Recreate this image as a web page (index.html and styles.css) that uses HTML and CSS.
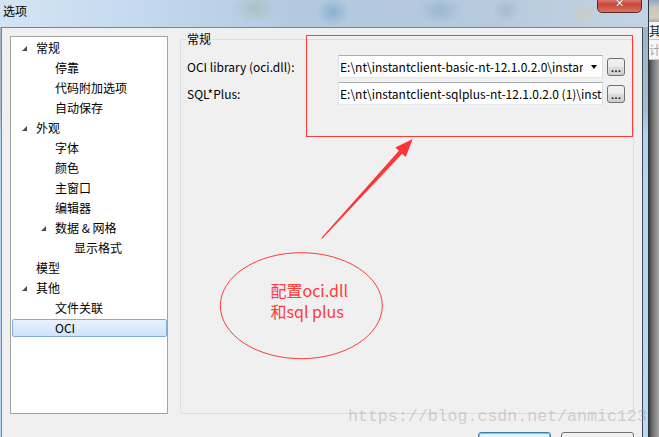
FILE: index.html
```html
<!DOCTYPE html>
<html lang="zh-CN">
  <head>
    <meta charset="UTF-8" />
    <title>选项</title>
    <link rel="stylesheet" href="styles.css">
  </head>

  <body>
    <div class="screen">
      <div class="dialog">
        <div class="titlebar">
          <span class="title">选项</span>
          <span class="close">✕</span>
        </div>
        <div class="frame-row">
          <div class="client">
            <div class="main">
              <div class="tree">
                <div class="node"><span class="tw open"></span>常规</div>
                <div class="node lv1"><span class="tw"></span>停靠</div>
                <div class="node lv1"><span class="tw"></span>代码附加选项</div>
                <div class="node lv1"><span class="tw"></span>自动保存</div>
                <div class="node"><span class="tw open"></span>外观</div>
                <div class="node lv1"><span class="tw"></span>字体</div>
                <div class="node lv1"><span class="tw"></span>颜色</div>
                <div class="node lv1"><span class="tw"></span>主窗口</div>
                <div class="node lv1"><span class="tw"></span>编辑器</div>
                <div class="node lv1"><span class="tw open"></span>数据 &amp; 网格</div>
                <div class="node lv2"><span class="tw"></span>显示格式</div>
                <div class="node"><span class="tw"></span>模型</div>
                <div class="node"><span class="tw open"></span>其他</div>
                <div class="node lv1"><span class="tw"></span>文件关联</div>
                <div class="node lv1 sel"><span class="tw"></span>OCI</div>
              </div>

              <fieldset class="group">
                <legend>常规</legend>
                <div class="form">
                  <label>OCI library (oci.dll):</label>
                  <div class="field combo">
                    <span class="val">E:\nt\instantclient-basic-nt-12.1.0.2.0\instantclient_12_1\oci.dll</span>
                    <span class="arrow"></span>
                  </div>
                  <button class="browse">...</button>

                  <label>SQL*Plus:</label>
                  <div class="field">
                    <span class="val">E:\nt\instantclient-sqlplus-nt-12.1.0.2.0 (1)\instantclient_12_1\sqlplus.exe</span>
                  </div>
                  <button class="browse">...</button>
                </div>
              </fieldset>
            </div>

            <div class="buttons">
              <button class="btn default"></button>
              <button class="btn"></button>
            </div>
          </div>
        </div>
      </div>

      <div class="behind">
        <div class="b-top"></div>
        <div class="b-tool">其<span class="b-icon"></span></div>
        <div class="b-row">计</div>
      </div>

      <!-- 标注 -->
      <svg class="marks" width="659" height="437" viewBox="0 0 659 437">
        <rect class="mark-line" x="306.5" y="35.5" width="326" height="101" />
        <polygon class="mark-fill"
          points="321.3,238 322.2,238.7 402.1,153.8 405.7,157 412.7,139 395.3,147.6 398.9,150.8" />
        <ellipse class="mark-line" cx="301.3" cy="305.7" rx="81" ry="53" />
        <text class="mark-text" x="270.5" y="297">配置oci.dll</text>
        <text class="mark-text" x="270.5" y="318">和sql plus</text>
      </svg>

      <div class="watermark">https://blog.csdn.net/anmic123</div>
    </div>
  </body>
</html>
```

FILE: styles.css
```css
* {
  margin: 0;
  padding: 0;
  box-sizing: border-box;
}

html,
body {
  width: 659px;
  height: 437px;
  overflow: hidden;
}

body {
  font-family: "Noto Sans CJK SC", "Noto Sans", sans-serif;
  font-size: 12px;
  color: #000;
  background: #b9d3ec;
}

.screen {
  position: relative;
  display: flex;
  width: 659px;
  height: 437px;
}

/* 对话框 */
.dialog {
  width: 649px;
  display: flex;
  flex-direction: column;
  border-right: 1px solid #2c3742;
  background: linear-gradient(to bottom, #9fb0c1 0, #a8bccf 110px, #b7d3ee 135px, #bcd8f2 100%);
}

.titlebar {
  height: 27px;
  display: flex;
  justify-content: space-between;
  align-items: flex-start;
  background:
    radial-gradient(ellipse 22px 14px at 255px 8px, rgba(140, 170, 120, 0.3), transparent),
    radial-gradient(ellipse 16px 14px at 333px 12px, rgba(60, 130, 190, 0.35), transparent),
    radial-gradient(ellipse 22px 14px at 440px 10px, rgba(110, 150, 190, 0.35), transparent),
    radial-gradient(ellipse 14px 12px at 506px 10px, rgba(120, 150, 180, 0.3), transparent),
    radial-gradient(ellipse 14px 12px at 582px 14px, rgba(220, 200, 140, 0.35), transparent),
    linear-gradient(to right, #d3e4f4 0, #c6dbef 120px, #b2c9df 300px, #b6cadd 480px, #c3d3e2 100%);
}

.title {
  margin: 4px 0 0 3px;
  line-height: 14px;
}

.close {
  width: 45px;
  height: 19px;
  margin: -6px 6px 0 0;
  border: 1px solid #5c2b27;
  border-radius: 0 0 5px 5px;
  background: linear-gradient(#eab0a3, #c9463b 55%, #d9765f);
  color: #fff;
  font-family: "DejaVu Sans", sans-serif;
  font-size: 11px;
  font-weight: bold;
  line-height: 17px;
  text-align: center;
  text-shadow: 0 0 1px #4a1a16;
}

.frame-row {
  flex: 1;
  display: flex;
  min-height: 0;
}

.client {
  width: 642px;
  margin-left: 1px;
  border: 1px solid #71869c;
  border-right-color: #3c4752;
  border-bottom: none;
  background: #f0f0f0;
  padding: 4px 8px 0 8px;
  display: flex;
  flex-direction: column;
  overflow: hidden;
}

.main {
  height: 382px;
  flex: none;
  display: flex;
  gap: 12px;
}

/* 左侧树 */
.tree {
  width: 158px;
  margin-top: 4px;
  border: 1px solid #a3a3a3;
  background: #fff;
  padding-top: 1px;
}

.node {
  height: 20px;
  line-height: 20px;
  display: flex;
  align-items: center;
  padding-left: 6px;
  white-space: nowrap;
}

.node.lv1 {
  padding-left: 25px;
}

.node.lv2 {
  padding-left: 44px;
}

.tw {
  width: 19px;
  height: 20px;
  flex: none;
  display: flex;
  align-items: center;
}

.tw.open::before {
  content: "";
  width: 0;
  height: 0;
  margin: 1px 0 0 5px;
  border-left: 5px solid transparent;
  border-bottom: 5px solid #4b4b4b;
}

.node.sel {
  height: 18px;
  line-height: 16px;
  margin: 1px 0 1px 1px;
  padding-left: 23px;
  border: 1px solid #84acdd;
  border-radius: 2px;
  background: linear-gradient(#e8f1fd, #cfe3fc);
}

.node.sel .tw {
  height: 16px;
}

/* 右侧分组 */
.group {
  flex: 1;
  min-width: 0;
  margin: 0;
  padding: 0 7px 0 5px;
  border: 1px solid #d5dfe5;
  border-radius: 3px;
}

.group legend {
  padding: 0 1px;
  line-height: 14px;
}

.form {
  margin-top: 9px;
  padding-left: 1px;
  display: grid;
  grid-template-columns: 151px 265px 22px;
  grid-auto-rows: 23px;
  row-gap: 4px;
  align-items: center;
}

.field {
  height: 23px;
  display: flex;
  align-items: center;
  border: 1px solid #abadb3;
  border-color: #abadb3 #dbdfe6 #e3e9ef #e2e3ea;
  background: #fff;
  padding-left: 1px;
  white-space: nowrap;
  overflow: hidden;
}

.field .val {
  flex: 1;
  min-width: 0;
  overflow: hidden;
  line-height: 21px;
}

.combo .val {
  margin-right: 8px;
}

.arrow {
  flex: none;
  width: 0;
  height: 0;
  margin-right: 5px;
  border-left: 3.5px solid transparent;
  border-right: 3.5px solid transparent;
  border-top: 4px solid #000;
}

.browse {
  justify-self: end;
  width: 18px;
  height: 18px;
  border: 1px solid #707070;
  border-radius: 3px;
  background: linear-gradient(#f2f2f2, #ebebeb 50%, #dddddd 50%, #cfcfcf);
  font-family: "DejaVu Sans", sans-serif;
  font-size: 9px;
  font-weight: bold;
  line-height: 9px;
  padding-top: 5px;
  color: #222;
}

/* 底部按钮 */
.buttons {
  flex: none;
  display: flex;
  justify-content: flex-end;
  gap: 10px;
  margin-top: 18px;
}

.btn {
  width: 73px;
  height: 23px;
  border: 1px solid #707070;
  border-radius: 3px;
  background: linear-gradient(#f2f2f2, #ebebeb 50%, #dddddd 50%, #cfcfcf);
}

.btn.default {
  border-color: #3c7fb1;
  box-shadow: inset 0 0 0 1px #48d7fe;
  background: linear-gradient(#eaf6fd, #d9f0fc 50%, #bee6fd 50%, #a7d9f5);
}

/* 后面的窗口 */
.behind {
  width: 10px;
  display: flex;
  flex-direction: column;
  overflow: hidden;
  background: linear-gradient(to right, #3a3a3a, #6b6b6b 30%, #a8a8a8);
}

.b-top {
  height: 22px;
  background: linear-gradient(#8fa8c2, #c9c6b9 35%, #d2cdbf 80%, #a9a9a9);
}

.b-tool {
  height: 18px;
  display: flex;
  align-items: center;
  background: #f6f6f6;
  border-bottom: 1px solid #c6c6c6;
  color: #222;
  line-height: 18px;
  white-space: nowrap;
}

.b-icon {
  width: 4px;
  height: 10px;
  flex: none;
  background: #e0a040;
}

.b-row {
  height: 20px;
  background: #f6f6f6;
  border-bottom: 1px solid #c6c6c6;
  color: #a8a8a8;
  line-height: 20px;
  white-space: nowrap;
}

/* 标注层 */
.marks {
  position: absolute;
  top: 0;
  left: 0;
  pointer-events: none;
}

.mark-line {
  fill: none;
  stroke: #ff3b3b;
  stroke-width: 1;
}

.mark-fill {
  fill: #ff3434;
}

.mark-text {
  fill: #ff3b3b;
  font-family: "Noto Sans CJK SC", sans-serif;
  font-size: 16px;
}

.watermark {
  position: absolute;
  left: 348px;
  top: 407px;
  font-family: "Liberation Mono", monospace;
  font-size: 16.6px;
  line-height: 19px;
  color: rgba(150, 150, 150, 0.4);
  white-space: nowrap;
  pointer-events: none;
}
```
